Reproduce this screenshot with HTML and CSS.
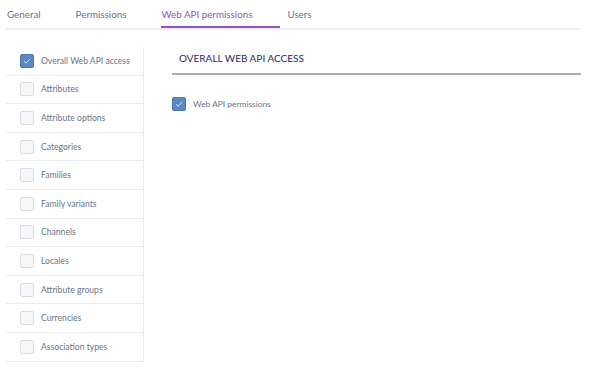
FILE: index.html
```html
<!DOCTYPE html>
<html lang="en">
<head>
    <meta charset="UTF-8">
    <title>Role - Web API permissions</title>
    <link rel="stylesheet" href="styles.css">
</head>
<body>
    <div class="page">
        <div class="tabs">
            <div class="tab">General</div>
            <div class="tab">Permissions</div>
            <div class="tab active">Web API permissions</div>
            <div class="tab">Users</div>
        </div>

        <div class="content">
            <div class="groups">
                <div class="group"><span class="box checked"><svg viewBox="0 0 14 14"><path d="M3.5 7.2 L6 9.6 L10.5 4.6"/></svg></span>Overall Web API access</div>
                <div class="group"><span class="box"></span>Attributes</div>
                <div class="group"><span class="box"></span>Attribute options</div>
                <div class="group"><span class="box"></span>Categories</div>
                <div class="group"><span class="box"></span>Families</div>
                <div class="group"><span class="box"></span>Family variants</div>
                <div class="group"><span class="box"></span>Channels</div>
                <div class="group"><span class="box"></span>Locales</div>
                <div class="group"><span class="box"></span>Attribute groups</div>
                <div class="group"><span class="box"></span>Currencies</div>
                <div class="group"><span class="box"></span>Association types</div>
            </div>

            <div class="panel">
                <div class="panel-title">Overall Web API access</div>
                <div class="field"><span class="box checked"><svg viewBox="0 0 14 14"><path d="M3.5 7.2 L6 9.6 L10.5 4.6"/></svg></span>Web API permissions</div>
            </div>
        </div>
    </div>
</body>
</html>
```

FILE: styles.css
```css
body {
    margin: 0;
    padding: 0;
    font-family: Lato, "Open Sans", sans-serif;
    color: #67768a;
    background: #fff;
}
.page {
    padding-left: 6px;
    width: 575px;
}
.tabs {
    display: flex;
    height: 28px;
    border-bottom: 2px solid #eceef1;
}
.tab {
    font-size: 9.8px;
    line-height: 28px;
    padding-right: 28px;
    margin-right: 7px;
    border-bottom: 2px solid transparent;
}
.tab:first-child {
    margin-left: 1px;
}
.tab.active {
    color: #9452ba;
    border-bottom-color: #9452ba;
}
.content {
    display: flex;
    margin-top: 17px;
}
.groups {
    width: 137px;
    border-right: 1px solid #e8ebee;
}
.group {
    display: flex;
    align-items: center;
    gap: 7px;
    box-sizing: border-box;
    height: 28.6px;
    padding-left: 14px;
    border-bottom: 1px solid #e8ebee;
    font-size: 8.6px;
}
.box {
    width: 14px;
    height: 14px;
    box-sizing: border-box;
    border: 1px solid #d9dde3;
    border-radius: 2px;
    background: #f6f7f9;
    flex: none;
}
.box svg {
    display: block;
    width: 12px;
    height: 12px;
}
.box svg path {
    fill: none;
    stroke: #dbe5f3;
    stroke-width: 1.1;
}
.box.checked {
    background: #5b88c4;
    border-color: #4c77b3;
}
.panel {
    flex: 1;
    margin-left: 28px;
}
.panel-title {
    height: 26px;
    padding-left: 7px;
    line-height: 22px;
    font-size: 10px;
    text-transform: uppercase;
    color: #2b2b5c;
    border-bottom: 2px solid #a9abb3;
}
.field {
    display: flex;
    align-items: center;
    gap: 7px;
    margin-top: 22px;
    font-size: 8.4px;
}
```
